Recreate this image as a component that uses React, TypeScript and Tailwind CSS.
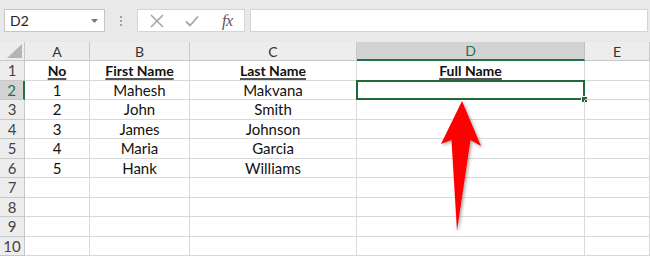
import React from "react";

const cols = [
  { key: "A", w: "w-[65px]" },
  { key: "B", w: "w-[100px]" },
  { key: "C", w: "w-[167px]" },
  { key: "D", w: "w-[228px]" },
  { key: "E", w: "flex-1" },
];

const rows: string[][] = [
  ["No", "First Name", "Last Name", "Full Name", ""],
  ["1", "Mahesh", "Makvana", "", ""],
  ["2", "John", "Smith", "", ""],
  ["3", "James", "Johnson", "", ""],
  ["4", "Maria", "Garcia", "", ""],
  ["5", "Hank", "Williams", "", ""],
  ["", "", "", "", ""],
  ["", "", "", "", ""],
  ["", "", "", "", ""],
  ["", "", "", "", ""],
];

function Toolbar() {
  return (
    <div className="flex items-center h-[42px] pb-[10px] pt-[9px] pl-[4px] bg-[#e9e9e9]">
      {/* Name box */}
      <div className="flex items-center justify-between w-[101px] h-[23px] bg-white border border-[#c6c6c6] pl-[5px] pr-[6px]">
        <span className="text-[14px] text-[#222]">D2</span>
        <svg width="7" height="4" viewBox="0 0 7 4">
          <path d="M0 0h7L3.5 4z" fill="#777" />
        </svg>
      </div>
      {/* dots */}
      <div className="w-[32px] flex flex-col items-center gap-[2px]">
        <span className="w-[2px] h-[2px] bg-[#a0a0a0]" />
        <span className="w-[2px] h-[2px] bg-[#a0a0a0]" />
        <span className="w-[2px] h-[2px] bg-[#a0a0a0]" />
      </div>
      {/* formula buttons */}
      <div className="flex items-center w-[108px] h-[23px] bg-white border border-[#d4d4d4]">
        <svg width="14" height="14" viewBox="0 0 14 14" className="ml-[12px]">
          <path d="M1 1L13 13M13 1L1 13" stroke="#a6a6a6" strokeWidth="1.6" />
        </svg>
        <svg width="14" height="12" viewBox="0 0 14 12" className="ml-[21px]">
          <path d="M1 6.5L5 10.5L13 1.5" stroke="#a6a6a6" strokeWidth="1.8" fill="none" />
        </svg>
        <span className="ml-[23px] text-[16px] italic text-[#555] font-['Liberation_Serif',serif] tracking-[-0.5px]">
          fx
        </span>
      </div>
      <div className="ml-[5px] flex-1 h-[23px] bg-white border border-[#d4d4d4] mr-[2px]" />
    </div>
  );
}

function Arrow() {
  return (
    <svg
      className="absolute left-[430px] top-[96px] pointer-events-none"
      width="64"
      height="142"
      viewBox="430 96 64 142"
    >
      <defs>
        <filter id="sh" x="-30%" y="-10%" width="160%" height="130%">
          <feDropShadow dx="1.5" dy="1.5" stdDeviation="1.5" floodColor="#000" floodOpacity="0.35" />
        </filter>
      </defs>
      <polygon
        points="462,101 481,146 470.5,140 457,231 451.5,140 441,144"
        fill="#ff0000"
        filter="url(#sh)"
      />
    </svg>
  );
}

export default function App() {
  return (
    <div className="relative w-[650px] h-[256px] overflow-hidden bg-white font-['Lato','Liberation_Sans',sans-serif]">
      <Toolbar />
      {/* column headers */}
      <div className="flex h-[19px] bg-[#ededed] text-[14px] text-[#333]">
        <div className="w-[25px] border-r border-b border-[#c8c8c8] relative flex items-end justify-end pr-[2px] pb-[2px]">
          <svg width="15" height="14" viewBox="0 0 15 14">
            <path d="M15 0V14H0z" fill="#b5b5b5" />
          </svg>
        </div>
        {cols.map((c) =>
          c.key === "D" ? (
            <div
              key={c.key}
              className={`${c.w} flex items-center justify-center bg-[#d3d3d3] text-[#217346] border-r border-[#c0c0c0] border-b-2 border-b-[#217346]`}
            >
              {c.key}
            </div>
          ) : (
            <div
              key={c.key}
              className={`${c.w} flex items-center justify-center border-r border-b border-[#c8c8c8]`}
            >
              {c.key}
            </div>
          )
        )}
      </div>
      {/* rows */}
      {rows.map((r, i) => (
        <div key={i} className="flex h-[19.5px] text-[15px] text-[#111]">
          {i === 1 ? (
            <div className="w-[25px] flex items-center justify-center bg-[#d3d3d3] text-[#217346] border-b border-[#c8c8c8] border-r-2 border-r-[#217346]">
              {i + 1}
            </div>
          ) : (
            <div className="w-[25px] flex items-center justify-center bg-[#ededed] text-[#444] border-r border-b border-[#c8c8c8]">
              {i + 1}
            </div>
          )}
          {cols.map((c, j) => (
            <div
              key={c.key}
              className={`${c.w} relative flex items-center justify-center border-r border-b border-[#d9d9d9]`}
            >
              {i === 0 ? (
                <span className="text-[14px] font-bold underline underline-offset-2 decoration-[1.5px] decoration-[#555]">
                  {r[j]}
                </span>
              ) : (
                r[j]
              )}
              {i === 1 && c.key === "D" && (
                <div className="absolute -left-[1px] -top-[1px] -right-[1px] -bottom-[1px] border-2 border-[#1e6b38]">
                  <span className="absolute -right-[5px] -bottom-[5px] w-[7px] h-[7px] bg-[#1e6b38] border border-white" />
                </div>
              )}
            </div>
          ))}
        </div>
      ))}
      <Arrow />
    </div>
  );
}
